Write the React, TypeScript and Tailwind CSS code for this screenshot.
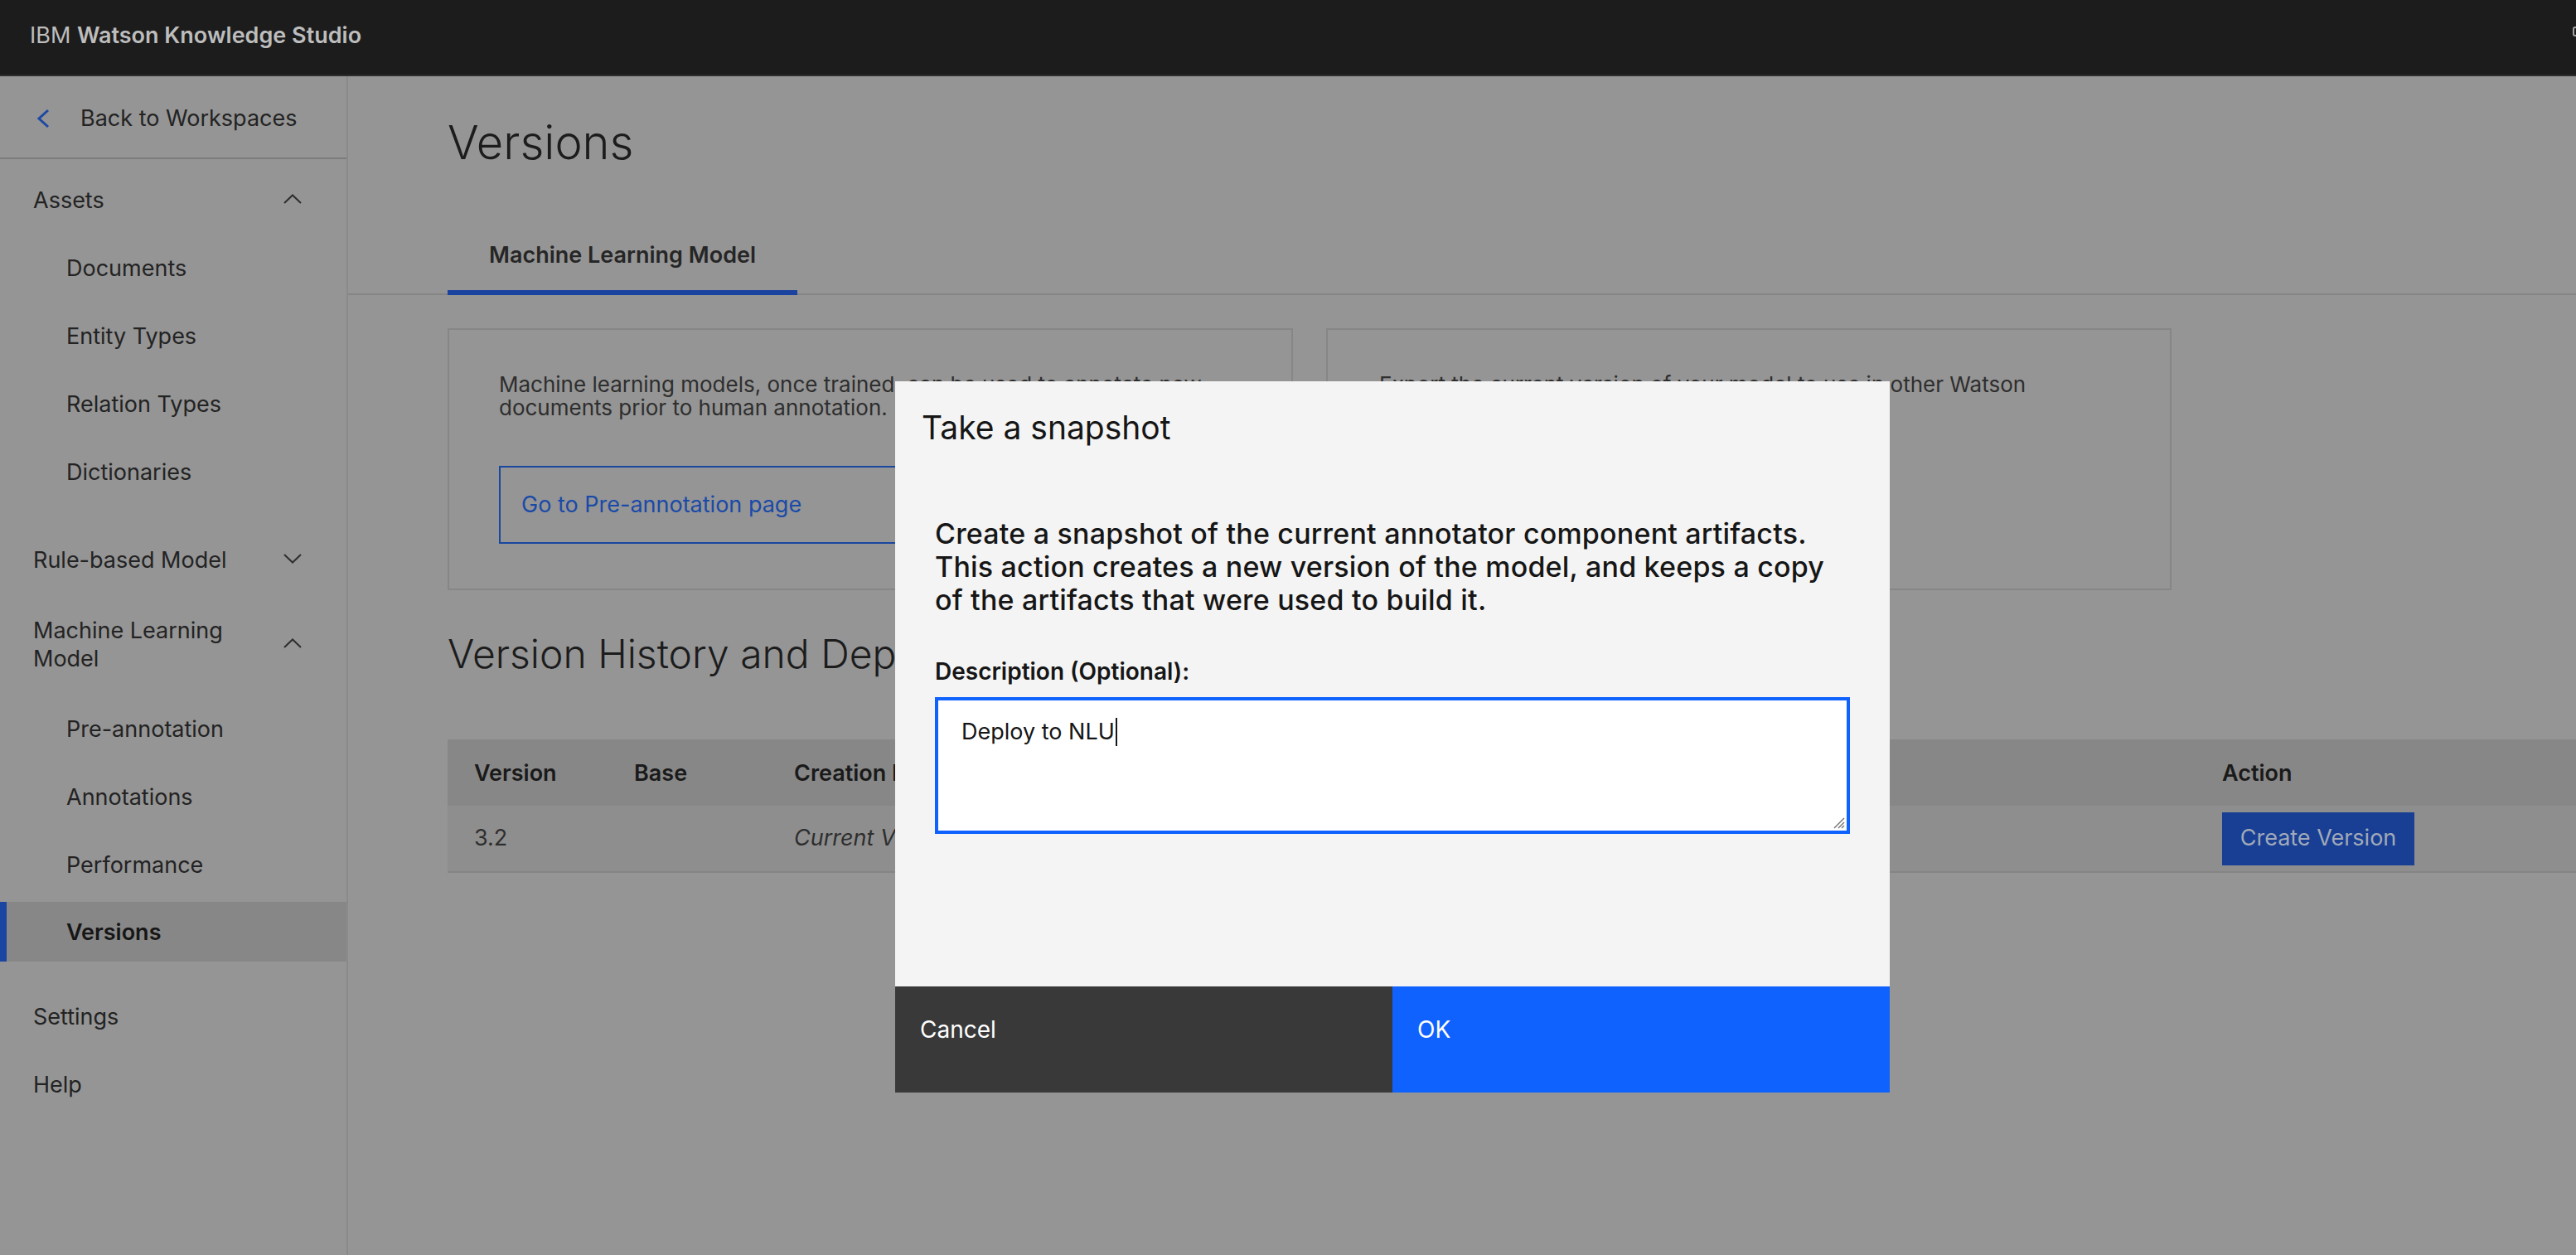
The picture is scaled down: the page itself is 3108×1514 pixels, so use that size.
import React from "react";

function ChevronUp() {
  return (
    <svg width="22" height="12" viewBox="0 0 22 12" fill="none">
      <polyline points="1,11 11,1.5 21,11" stroke="#2e2e2e" strokeWidth="2" />
    </svg>
  );
}

function ChevronDown() {
  return (
    <svg width="22" height="12" viewBox="0 0 22 12" fill="none">
      <polyline points="1,1 11,10.5 21,1" stroke="#2e2e2e" strokeWidth="2" />
    </svg>
  );
}

function NavGroup({ label, open }: { label: React.ReactNode; open: boolean }) {
  return (
    <div className="flex min-h-[72px] items-center justify-between pl-[40px] pr-[54px] text-[27px] leading-[34px] text-[#232323]">
      <span className="pt-[4px]">{label}</span>
      {open ? <ChevronUp /> : <ChevronDown />}
    </div>
  );
}

function NavItem({ label, active }: { label: string; active?: boolean }) {
  if (active) {
    return (
      <div className="flex h-[72px] items-center border-l-[8px] border-[#1a45a0] bg-[#878787] pl-[72px] pt-[3px] text-[27px] font-semibold text-[#161616]">
        {label}
      </div>
    );
  }
  return (
    <div className="flex h-[72px] items-center pl-[80px] pt-[4px] text-[27px] text-[#232323]">
      {label}
    </div>
  );
}

function Sidebar() {
  return (
    <aside className="flex w-[420px] shrink-0 flex-col border-r-2 border-[#8a8a8a]">
      <div className="flex h-[100px] items-center border-b-2 border-[#7c7c7c] pl-[43px] pt-[4px]">
        <svg width="18" height="24" viewBox="0 0 18 24" fill="none">
          <polyline points="15,2 4,12 15,22" stroke="#1d49a3" strokeWidth="3" />
        </svg>
        <span className="ml-[36px] text-[27px] text-[#232323]">Back to Workspaces</span>
      </div>
      <nav className="flex flex-col gap-[10px] pt-[12px]">
        <NavGroup label="Assets" open />
        <NavItem label="Documents" />
        <NavItem label="Entity Types" />
        <NavItem label="Relation Types" />
        <NavItem label="Dictionaries" />
        <div className="h-[14px]" />
        <NavGroup label="Rule-based Model" open={false} />
        <div className="flex h-[112px] items-center justify-between pl-[40px] pr-[54px] text-[27px] leading-[34px] text-[#232323]">
          <span className="pt-[4px]">
            Machine Learning
            <br />
            Model
          </span>
          <ChevronUp />
        </div>
        <NavItem label="Pre-annotation" />
        <NavItem label="Annotations" />
        <NavItem label="Performance" />
        <NavItem label="Versions" active />
        <div className="h-[9px]" />
        <div className="flex h-[72px] items-center pl-[40px] pt-[4px] text-[27px] text-[#232323]">Settings</div>
        <div className="flex h-[72px] items-center pl-[40px] pt-[4px] text-[27px] text-[#232323]">Help</div>
      </nav>
    </aside>
  );
}

function VersionTable() {
  return (
    <div className="mt-[73px] pl-[120px]">
      <div className="grid h-[80px] grid-cols-[193px_193px_1fr_459px] items-center bg-[#878787] pt-[2px] text-[27px] font-semibold text-[#1a1a1a]">
        <div className="pl-[32px]">Version</div>
        <div className="pl-[32px]">Base</div>
        <div className="pl-[32px]">Creation Date</div>
        <div className="pl-[32px]">Action</div>
      </div>
      <div className="grid h-[81px] grid-cols-[193px_193px_1fr_459px] items-center border-b-2 border-[#858585] bg-[#8e8e8e] text-[27px] text-[#2e2e2e]">
        <div className="pl-[32px]">3.2</div>
        <div className="pl-[32px]" />
        <div className="pl-[32px] italic">Current Version</div>
        <div className="pl-[32px]">
          <button className="flex h-[64px] w-[232px] items-center justify-center bg-[#183f94] text-[27px] text-[#a1a9b9]">
            Create Version
          </button>
        </div>
      </div>
    </div>
  );
}

function SnapshotDialog() {
  return (
    <div className="absolute left-[1080px] top-[460px] flex h-[858px] w-[1200px] flex-col bg-[#f4f4f4]">
      <h2 className="pl-[32px] pt-[32px] text-[39px] leading-[48px] text-[#161616]">Take a snapshot</h2>
      <div className="pl-[48px] pr-[48px]">
        <p className="mt-[84px] whitespace-nowrap text-[34px] font-medium leading-[40px] tracking-[0.2px] text-[#161616]">
          Create a snapshot of the current annotator component artifacts.
          <br />
          This action creates a new version of the model, and keeps a copy
          <br />
          of the artifacts that were used to build it.
        </p>
        <label className="mt-[46px] block pt-[2px] text-[28px] font-semibold leading-[36px] text-[#161616]">
          Description (Optional):
        </label>
        <div className="relative mt-[13px] h-[165px] border-4 border-[#0f62fe] bg-white pl-[28px] pt-[20px]">
          <div className="flex items-center text-[27px] leading-[36px] text-[#161616]">
            Deploy to NLU
            <span className="ml-[1px] inline-block h-[34px] w-[2px] bg-[#161616]" />
          </div>
          <svg className="absolute bottom-[2px] right-[2px]" width="16" height="16" viewBox="0 0 16 16">
            <line x1="15" y1="3" x2="3" y2="15" stroke="#777" strokeWidth="1.5" />
            <line x1="15" y1="8" x2="8" y2="15" stroke="#777" strokeWidth="1.5" />
            <line x1="15" y1="12" x2="12" y2="15" stroke="#777" strokeWidth="1.5" />
          </svg>
        </div>
      </div>
      <div className="mt-auto grid h-[128px] grid-cols-2 text-[28px] leading-[36px] text-white">
        <div className="bg-[#393939] pl-[30px] pt-[34px]">Cancel</div>
        <div className="bg-[#0f62fe] pl-[30px] pt-[34px]">OK</div>
      </div>
    </div>
  );
}

export default function App() {
  return (
    <div className="relative h-screen w-full overflow-hidden bg-[#959595] font-['Inter','Noto_Sans',sans-serif]">
      <header className="relative flex h-[92px] items-center border-b-2 border-[#2d2d2d] bg-[#1c1c1c] pb-[4px] pl-[36px] text-[27px] text-[#bdbdbd]">
        <span>
          IBM <span className="font-semibold">Watson Knowledge Studio</span>
        </span>
        <div className="absolute right-[-12px] top-[32px] h-[12px] w-[16px] rounded-[3px] border-2 border-[#a5a5a5]" />
      </header>
      <div className="flex h-[calc(100%-92px)]">
        <Sidebar />
        <main className="flex-1">
          <div className="pl-[120px] pt-[48px]">
            <h1 className="text-[56px] font-light leading-[64px] text-[#1c1c1c]">Versions</h1>
          </div>
          <div className="mt-[62px] flex border-b-2 border-[#858585] pl-[120px]">
            <div className="-mb-[2px] w-[422px] border-b-[6px] border-[#1a43a0] pb-[24px] pl-[50px] pt-[24px] text-[27px] font-semibold leading-[36px] text-[#262626]">
              Machine Learning Model
            </div>
          </div>
          <div className="mt-[40px] flex gap-[40px] pl-[120px]">
            <div className="h-[316px] w-[1020px] border-2 border-[#868686] pl-[60px] pt-[52px]">
              <p className="text-[26px] leading-[28px] text-[#2e2e2e]">
                Machine learning models, once trained, can be used to annotate new
                <br />
                documents prior to human annotation.
              </p>
              <button className="mt-[56px] h-[94px] whitespace-nowrap border-2 border-[#1a47a0] pl-[25px] pr-[126px] text-left text-[27px] text-[#1a4aa8]">
                Go to Pre-annotation page
              </button>
            </div>
            <div className="h-[316px] w-[1020px] border-2 border-[#868686] pl-[62px] pt-[52px]">
              <p className="text-[26px] leading-[28px] text-[#2e2e2e]">
                Export the current version of your model to use in other Watson
                <br />
                services.
              </p>
            </div>
          </div>
          <div className="mt-[47px] pl-[120px]">
            <h2 className="text-[48px] font-light leading-[60px] text-[#1c1c1c]">
              Version History and Deployment
            </h2>
          </div>
          <VersionTable />
        </main>
      </div>
      <SnapshotDialog />
    </div>
  );
}
